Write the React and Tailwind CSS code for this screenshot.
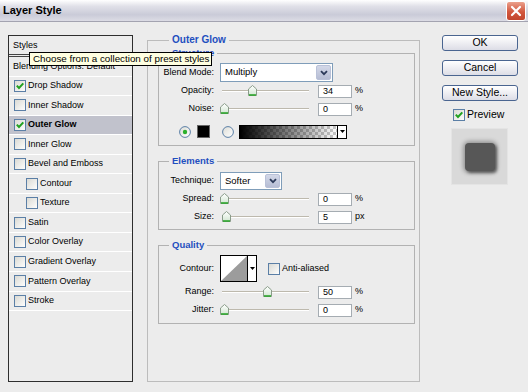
import React from "react";

const styleItems = [
  { name: "Drop Shadow", checked: true },
  { name: "Inner Shadow" },
  { name: "Outer Glow", checked: true, active: true },
  { name: "Inner Glow" },
  { name: "Bevel and Emboss" },
  { name: "Contour", sub: true },
  { name: "Texture", sub: true },
  { name: "Satin" },
  { name: "Color Overlay" },
  { name: "Gradient Overlay" },
  { name: "Pattern Overlay" },
  { name: "Stroke" },
];

function CheckBox({ checked }) {
  return (
    <svg width="12" height="12" viewBox="0 0 12 12" className="shrink-0">
      <defs>
        <linearGradient id="cbg" x1="0" y1="0" x2="1" y2="1">
          <stop offset="0" stopColor="#d8d8d2" />
          <stop offset="1" stopColor="#ffffff" />
        </linearGradient>
      </defs>
      <rect x="0.5" y="0.5" width="11" height="11" fill="url(#cbg)" stroke="#5b7fa6" />
      {checked && (
        <path d="M2.8 5.6 L5 8 L9.3 3.4" fill="none" stroke="#21a121" strokeWidth="2" />
      )}
    </svg>
  );
}

function Radio({ on }) {
  return (
    <svg width="12" height="12" viewBox="0 0 12 12" className="shrink-0">
      <defs>
        <linearGradient id="rbg" x1="0" y1="0" x2="1" y2="1">
          <stop offset="0" stopColor="#dcdcd6" />
          <stop offset="1" stopColor="#ffffff" />
        </linearGradient>
      </defs>
      <circle cx="6" cy="6" r="5.4" fill="url(#rbg)" stroke="#5b7fa6" />
      {on && <circle cx="6" cy="6" r="2.2" fill="#2bb02b" />}
    </svg>
  );
}

function Thumb() {
  return (
    <svg width="9" height="11" viewBox="0 0 9 11">
      <defs>
        <linearGradient id="th" x1="0" y1="0" x2="0" y2="1">
          <stop offset="0" stopColor="#ffffff" />
          <stop offset="1" stopColor="#d2e6d2" />
        </linearGradient>
      </defs>
      <path d="M0.5 4 L4.5 0.5 L8.5 4 L8.5 10.5 L0.5 10.5 Z" fill="url(#th)" stroke="#8a9c8a" />
      <path d="M1 10 H8" stroke="#2ea52e" strokeWidth="1.6" />
    </svg>
  );
}

function Chevron() {
  return (
    <svg width="8" height="6" viewBox="0 0 8 6">
      <path d="M1 1.2 L4 4.2 L7 1.2" fill="none" stroke="#2c3a5a" strokeWidth="1.8" />
    </svg>
  );
}

function SmallArrow() {
  return (
    <svg width="5" height="3" viewBox="0 0 5 3">
      <path d="M0 0 H5 L2.5 3 Z" fill="#000" />
    </svg>
  );
}

function Select({ value, className }) {
  return (
    <div className={`flex border border-[#7f9db9] bg-white ${className}`}>
      <div className="flex-1 flex items-center pl-[4px] text-[9.5px]">{value}</div>
      <div className="w-[15px] m-[1px] flex items-center justify-center rounded-[2px] border border-[#b9c1d8] bg-[linear-gradient(to_bottom,#d3d8e8,#b6bdd4)]">
        <Chevron />
      </div>
    </div>
  );
}

function SliderRow({ label, pos, value, unit }) {
  return (
    <div className="flex items-center h-[18px]">
      <div className="w-[55px] text-right">{label}</div>
      <div className="relative ml-[4px] w-[94px] h-[18px] flex items-center">
        <div className="ml-[4px] w-[87px] h-[2px] bg-[#bdb9ad] border-b border-white" />
        <div className="absolute top-[3px]" style={{ left: pos - 4.5 }}>
          <Thumb />
        </div>
      </div>
      <div className="ml-[6px] w-[34px] h-[13px] bg-white border border-[#a5acb2] leading-[11px] pl-[4px]">
        {value}
      </div>
      <div className="ml-[3px]">{unit}</div>
    </div>
  );
}

function Group({ title, className, children }) {
  return (
    <fieldset className={`border border-[#b2b2b2] ${className}`}>
      <legend className="ml-[10px] px-[3px] text-[9.5px] font-bold leading-[10px] text-[#1f4fbf]">
        {title}
      </legend>
      {children}
    </fieldset>
  );
}

function TitleBar() {
  return (
    <div className="h-[22px] flex items-center justify-between border-b border-[#a3a3b0] bg-[linear-gradient(to_bottom,#ffffff,#e0e0e8_30%,#cacbd8_70%,#dcdce5)]">
      <div className="pl-[3px] text-[11px] font-bold">Layer Style</div>
      <div className="mr-[2px] w-[20px] h-[20px] rounded-[3px] border border-white bg-[linear-gradient(to_bottom,#eba08c,#d2573e_55%,#c2452d)] flex items-center justify-center">
        <svg width="12" height="12" viewBox="0 0 12 12">
          <path d="M2 2 L10 10 M10 2 L2 10" stroke="#fff" strokeWidth="2.2" strokeLinecap="round" />
        </svg>
      </div>
    </div>
  );
}

function LeftPanel() {
  return (
    <div className="ml-[8px] mt-[13px] w-[125px] h-[347px] border border-[#2e2e2e] flex flex-col">
      <div className="h-[21px] pt-[4px] pl-[4px] leading-[10px] border-b-[3px] border-double border-[#444]">
        Styles
      </div>
      <div className="h-[19.55px] flex items-center pl-[4px] border-b border-white">
        Blending Options: Default
      </div>
      {styleItems.map((item) => (
        <div
          key={item.name}
          className={`h-[19.55px] flex items-center gap-[2px] border-b border-white ${
            item.sub ? "pl-[17px]" : "pl-[5px]"
          } ${item.active ? "bg-[#c1c2cc] font-bold" : ""}`}
        >
          <CheckBox checked={item.checked} />
          <span>{item.name}</span>
        </div>
      ))}
    </div>
  );
}

function MainPanel() {
  return (
    <fieldset className="ml-[14px] mt-[12px] w-[273px] h-[348px] border border-[#bcbcbc] pl-[10px] pr-[4px]">
      <legend className="ml-[11px] px-[3px] text-[10px] font-bold leading-[12px] text-[#1f4fbf]">
        Outer Glow
      </legend>

      <Group title="Structure" className="mt-[2px] pb-[6px]">
        <div className="mt-[5px] flex items-center h-[19px]">
          <div className="w-[55px] text-right">Blend Mode:</div>
          <Select value="Multiply" className="ml-[6px] w-[113px] h-[19px]" />
        </div>
        <SliderRow label="Opacity:" pos={34} value="34" unit="%" />
        <SliderRow label="Noise:" pos={6} value="0" unit="%" />
        <div className="mt-[6px] h-[15px] flex items-center">
          <div className="ml-[20px]">
            <Radio on />
          </div>
          <div className="ml-[6px] w-[13px] h-[13px] bg-black border border-[#666]" />
          <div className="ml-[12px]">
            <Radio />
          </div>
          <div className="ml-[5px] w-[108px] h-[14px] border border-black flex">
            <div className="flex-1 bg-[conic-gradient(#c9c9c9_25%,#ffffff_0_50%,#c9c9c9_0_75%,#ffffff_0)] bg-[length:6px_6px]">
              <div className="w-full h-full bg-[linear-gradient(to_right,#000,rgba(0,0,0,0))]" />
            </div>
            <div className="w-[9px] border-l border-black bg-white flex items-center justify-center">
              <SmallArrow />
            </div>
          </div>
        </div>
      </Group>

      <Group title="Elements" className="mt-[10px] pb-[3px]">
        <div className="mt-[6px] flex items-center h-[18px]">
          <div className="w-[55px] text-right">Technique:</div>
          <Select value="Softer" className="ml-[6px] w-[62px] h-[18px]" />
        </div>
        <SliderRow label="Spread:" pos={6} value="0" unit="%" />
        <SliderRow label="Size:" pos={8} value="5" unit="px" />
      </Group>

      <Group title="Quality" className="mt-[10px] pb-[4px]">
        <div className="mt-[5px] flex items-center h-[27px]">
          <div className="w-[55px] text-right">Contour:</div>
          <div className="ml-[6px] w-[37px] h-[27px] border border-black flex">
            <svg width="26" height="25" viewBox="0 0 26 25" className="bg-white">
              <path d="M0 25 L26 0 L26 25 Z" fill="#9c9c9c" />
            </svg>
            <div className="w-[9px] border-l border-black bg-white flex items-center justify-center">
              <SmallArrow />
            </div>
          </div>
          <div className="ml-[11px] flex items-center gap-[2px]">
            <CheckBox />
            <span>Anti-aliased</span>
          </div>
        </div>
        <div className="mt-[1px]">
          <SliderRow label="Range:" pos={49} value="50" unit="%" />
        </div>
        <SliderRow label="Jitter:" pos={6} value="0" unit="%" />
      </Group>
    </fieldset>
  );
}

function Button({ children, className = "" }) {
  return (
    <div
      className={`h-[16px] rounded-[3px] border border-[#4a6590] bg-[linear-gradient(to_bottom,#ffffff,#ebebf0_60%,#dcdde6)] flex items-center justify-center text-[10.5px] ${className}`}
    >
      {children}
    </div>
  );
}

function RightPanel() {
  return (
    <div className="ml-[22px] mt-[13px] w-[76px] flex flex-col">
      <Button>OK</Button>
      <Button className="mt-[9px]">Cancel</Button>
      <Button className="mt-[9px]">New Style...</Button>
      <div className="mt-[7px] ml-[11px] h-[13px] flex items-center gap-[2px] text-[10.5px]">
        <CheckBox checked />
        <span>Preview</span>
      </div>
      <div className="mt-[7px] ml-[9px] w-[57px] h-[57px] bg-[#d9d9d9] border border-[#e4e4e4] flex items-center justify-center">
        <div className="w-[30px] h-[28px] rounded-[4px] bg-[#575757] shadow-[0_0_4px_2px_rgba(0,0,0,0.3),2px_2px_3px_rgba(0,0,0,0.45)]" />
      </div>
    </div>
  );
}

export default function App() {
  return (
    <div className="relative w-[528px] h-[392px] overflow-hidden bg-[#ececec] font-['Liberation_Sans',sans-serif] text-[9px] text-black flex flex-col">
      <TitleBar />
      <div className="flex items-start">
        <LeftPanel />
        <MainPanel />
        <RightPanel />
      </div>
      <div className="absolute left-[29px] top-[52px] w-[183px] h-[14px] bg-[#ffffe1] border border-black text-[9.8px] leading-[12px] pl-[3px] whitespace-nowrap">
        Choose from a collection of preset styles
      </div>
    </div>
  );
}
